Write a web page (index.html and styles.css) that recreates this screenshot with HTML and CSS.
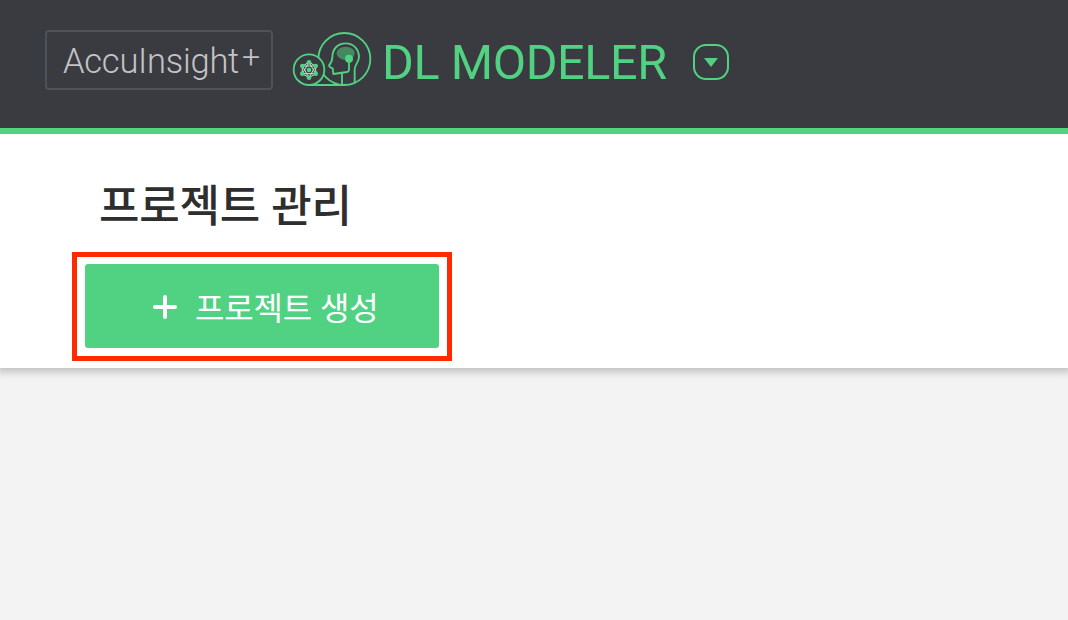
FILE: index.html
```html
<!DOCTYPE html>
<html lang="ko">
<head>
<meta charset="utf-8">
<title>DL MODELER</title>
<link rel="stylesheet" href="styles.css">
</head>
<body>
<header class="topbar">
  <div class="brand"><span class="brand-name">AccuInsight</span><span class="brand-plus">+</span></div>
  <svg class="logo" viewBox="0 0 300 225" fill="none" stroke="#51d282" stroke-width="5.5">
    <circle cx="178" cy="111" r="78"/>
    <path d="M72 189H178"/>
    <circle class="logo-badge" cx="72" cy="143" r="46"/>
    <ellipse class="logo-brain" cx="182" cy="94" rx="27" ry="20"/>
    <path d="M171 187V155M192 110V142Q192 149 186 150L145 156L143 139Q132 136 132 130Q141 121 142 107C142 81 158 64 182 64C206 64 222 82 222 105C222 121 209 127 209 142V181" stroke-linejoin="round"/>
    <circle class="logo-dot" cx="192" cy="110" r="12"/>
    <path class="logo-net" d="M72 121L92 132V155L72 167L52 155V132ZM72 121L92 155H52ZM52 132H92L72 167Z"/>
    <g class="logo-dot">
      <circle cx="72" cy="121" r="7"/><circle cx="92" cy="132" r="7"/><circle cx="92" cy="155" r="7"/>
      <circle cx="72" cy="167" r="7"/><circle cx="52" cy="155" r="7"/><circle cx="52" cy="132" r="7"/>
      <circle cx="72" cy="144" r="7"/>
    </g>
  </svg>
  <h1 class="product">DL MODELER</h1>
  <button class="switcher" aria-label="메뉴">
    <svg class="caret" viewBox="0 0 14 9"><path d="M0 0H14L7 9Z" fill="#51d282"/></svg>
  </button>
</header>
<section class="page-head">
  <h2 class="title">프로젝트 관리</h2>
  <div class="highlight">
    <button class="create">
      <svg class="plus" viewBox="0 0 24 24"><path d="M12 2V22M2 12H22" stroke="#fff" stroke-width="4" stroke-linecap="round"/></svg>
      <span>프로젝트 생성</span>
    </button>
  </div>
</section>
</body>
</html>
```
FILE: styles.css
```css
* { box-sizing: border-box; }
body { margin: 0; min-height: 620px; overflow-x: hidden; background: #f3f3f3; font-family: "Noto Sans CJK KR", sans-serif; }
button { font: inherit; padding: 0; border: 0; background: none; }
.topbar { position: relative; z-index: 1; display: flex; align-items: flex-start; height: 134px; padding-left: 45px; background: #3a3b40; border-bottom: 6px solid #51d282; font-family: Roboto, sans-serif; }
.brand { display: flex; width: 228px; height: 60px; margin-top: 30px; padding-left: 16px; border: 2px solid #4d5159; border-radius: 4px; color: #c3c3c6; font-weight: 300; white-space: nowrap; }
.brand-name { font-size: 34.5px; line-height: 58px; letter-spacing: -0.25px; }
.brand-plus { margin-left: 3px; font-size: 32px; line-height: 51px; }
.logo { width: 100px; height: 75px; margin: 22px 0 0 12px; }
.logo-badge { fill: #3a3b40; }
.logo-brain { fill: #458862; stroke: none; }
.logo-dot { fill: #51d282; stroke: none; }
.logo-net { stroke: #c5edd3; stroke-width: 3; }
.product { width: 307px; margin: 34px 0 0 -3px; color: #51d282; font-size: 48.5px; font-weight: 400; line-height: 58px; letter-spacing: -0.4px; white-space: nowrap; }
.switcher { display: flex; align-items: center; justify-content: center; width: 36px; height: 36px; margin-top: 44px; margin-left: 4px; border: 2px solid #51d282; border-radius: 13px; }
.caret { width: 14px; height: 9px; margin-top: 1px; }
.page-head { height: 234px; padding: 39px 0 0 72px; background: #fff; box-shadow: 0 1px 8px 3px rgba(0, 0, 0, 0.22); }
.title { height: 79px; margin: 0 0 0 27px; color: #2e2e2e; font-size: 44px; font-weight: 500; line-height: 60px; letter-spacing: -0.2px; word-spacing: -1px; }
.highlight { width: 380px; height: 109px; padding: 7px 8px; border: 5px solid #ff2a00; }
.create { display: flex; align-items: center; width: 354px; height: 84px; padding-left: 68px; gap: 18px; border-radius: 3px; background: #51d282; color: #fff; font-size: 32px; letter-spacing: -0.15px; word-spacing: -1px; white-space: nowrap; }
.plus { width: 24px; height: 24px; margin-top: 1px; }
```
